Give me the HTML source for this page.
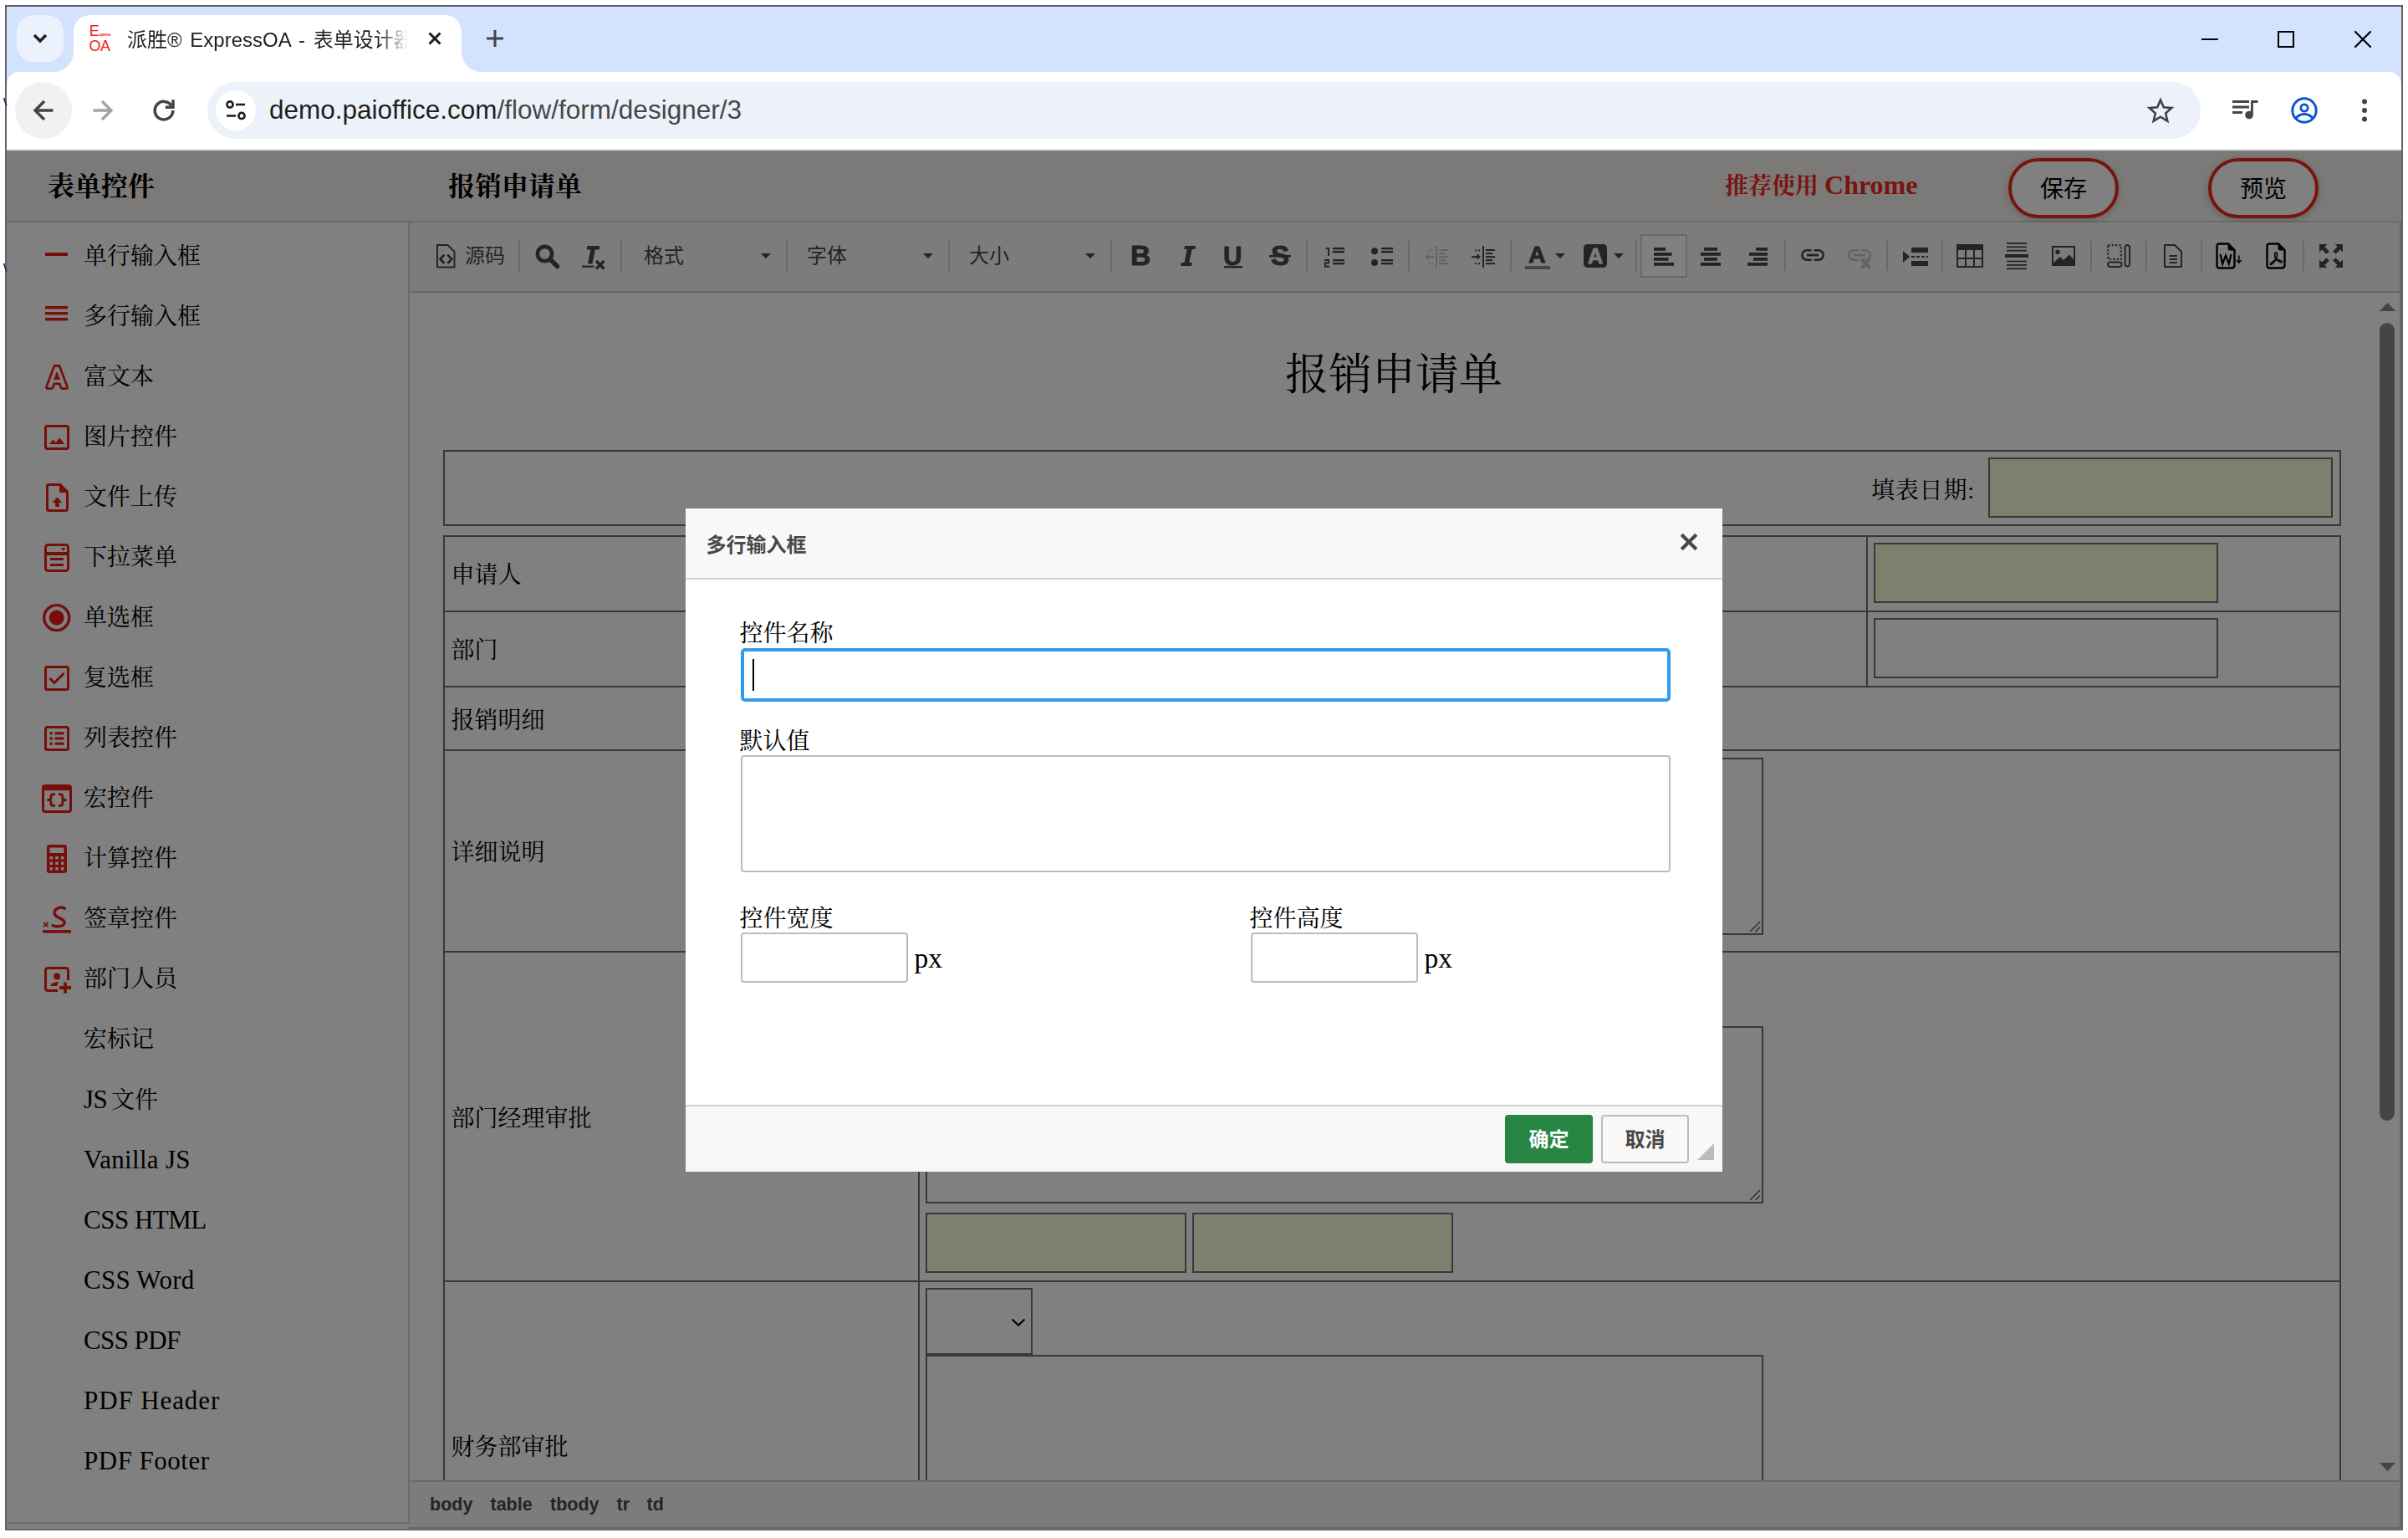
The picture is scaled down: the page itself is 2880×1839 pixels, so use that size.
<!DOCTYPE html>
<html lang="zh-CN">
<head>
<meta charset="utf-8">
<title>派胜® ExpressOA - 表单设计器</title>
<style>
*{box-sizing:border-box;margin:0;padding:0}
html,body{width:2880px;height:1839px;overflow:hidden;background:#fff}
body{position:relative;font-family:"Liberation Serif","Noto Serif CJK SC",serif;color:#000}
.abs{position:absolute}
.sans{font-family:"Liberation Sans","Noto Sans CJK SC",sans-serif}
.serif{font-family:"Liberation Serif","Noto Serif CJK SC",serif}
#win{position:absolute;left:6px;top:6px;width:2868px;height:1824px;background:#646464;border-top:2px solid #565b62;border-bottom:2px solid #6a6a6a;overflow:hidden}
#inner{position:absolute;left:2px;top:0;width:2864px;height:1820px;background:#fff;overflow:hidden}
/* coordinates inside #inner are offset by (8,8) from the screenshot */
#tabstrip{position:absolute;left:0;top:0;width:2864px;height:100px;background:#d3e3fd}
#navbar{position:absolute;left:0;top:78px;width:2864px;height:92px;background:#fff;border-radius:15px 15px 0 0}
#navline{position:absolute;left:0;top:170px;width:2864px;height:2px;background:#e4e4e4}
#page{position:absolute;left:0;top:172px;width:2864px;height:1648px;background:#fff;overflow:hidden}
#dim{position:absolute;left:0;top:172px;width:2864px;height:1648px;background:rgba(0,0,0,.498)}

/* ---- browser chrome ---- */
#tabdd{position:absolute;left:12px;top:10px;width:56px;height:56px;border-radius:20px;background:#ecf2fd}
#tab{position:absolute;left:80px;top:10px;width:464px;height:70px;background:#fff;border-radius:20px 20px 0 0}
#tab:before,#tab:after{content:"";position:absolute;bottom:2px;width:24px;height:24px;background:radial-gradient(circle at 0 0,rgba(255,255,255,0) 23.5px,#fff 24.5px)}
#tab:before{left:-24px}
#tab:after{right:-24px;transform:scaleX(-1)}
#fav{position:absolute;left:98px;top:19px;width:30px;height:36px;color:#ea1f1a;font-family:"Liberation Sans",sans-serif;line-height:1}
#ttl{word-spacing:3px;position:absolute;left:144px;top:22px;width:336px;height:36px;line-height:36px;font-size:24px;color:#1f1f1f;white-space:nowrap;overflow:hidden;font-family:"Liberation Sans","Noto Sans CJK SC",sans-serif;-webkit-mask-image:linear-gradient(90deg,#000 300px,transparent 336px);mask-image:linear-gradient(90deg,#000 300px,transparent 336px)}
#backbtn{position:absolute;left:10px;top:90px;width:68px;height:68px;border-radius:34px;background:#f1f1f1}
#omni{position:absolute;left:240px;top:90px;width:2384px;height:68px;border-radius:34px;background:#edf1fa}
#sinfo{position:absolute;left:250px;top:100px;width:48px;height:48px;border-radius:24px;background:#fff}
#url{position:absolute;left:314px;top:99px;height:48px;line-height:48px;font-size:31.5px;color:#1f1f1f;white-space:nowrap;font-family:"Liberation Sans",sans-serif}
#url span{color:#474747}
svg{position:absolute;overflow:visible}

/* ---- dialog (coords = screenshot - (8,8)) ---- */
#dlg{position:absolute;left:812px;top:600px;width:1240px;height:793px;background:#fff;overflow:hidden}
#dlg .tt{position:absolute;left:0;top:0;width:1240px;height:83px;background:#f8f8f8;border-bottom:2px solid #d1d1d1;box-sizing:content-box}
#dlg .ttx{position:absolute;left:24.5px;top:20px;height:48px;line-height:48px;font-size:24px;font-weight:bold;color:#484848;white-space:nowrap;font-family:"Liberation Sans","Noto Sans CJK SC",sans-serif}
#dlg .lb{position:absolute;height:48px;line-height:48px;font-size:28px;white-space:nowrap;color:#000}
#dlg .in{position:absolute;border:2px solid #bcbcbc;border-radius:4px;background:#fff}
#dlg .ft{position:absolute;left:0;top:713px;width:1240px;height:80px;background:#f8f8f8;border-top:2px solid #d1d1d1}
#dlg .bt{position:absolute;top:725px;width:105px;height:58px;border-radius:4px;font-size:24px;font-weight:bold;line-height:60px;text-align:center;font-family:"Liberation Sans","Noto Sans CJK SC",sans-serif}

/* ---- editor ---- */
#tb{position:absolute;left:482px;top:86px;width:2380px;height:82px;background:#f8f8f8;border-bottom:2px solid #d1d1d1;box-sizing:content-box}
#edr{position:absolute;left:2862px;top:86px;width:2px;height:1562px;background:#d1d1d1}
.sep{position:absolute;top:108px;width:2px;height:36px;background:#d1d1d1}
.tbt{position:absolute;top:102px;height:48px;line-height:48px;font-size:24px;color:#484848;white-space:nowrap;font-family:"Liberation Sans","Noto Sans CJK SC",sans-serif}
.tbl{-webkit-text-stroke:.9px #484848;position:absolute;font-family:"Liberation Sans",sans-serif;font-weight:bold;color:#484848;line-height:1;white-space:nowrap}
#content{position:absolute;left:482px;top:170px;width:2380px;height:1420px;background:#fff;overflow:hidden}
#path{position:absolute;left:482px;top:1590px;width:2380px;height:56px;background:#f8f8f8;border-top:2px solid #d1d1d1;font-family:"Liberation Sans",sans-serif;font-weight:bold;font-size:21.5px;color:#484848;line-height:54px;white-space:nowrap}
#path span{position:absolute;top:0}
#pbot{position:absolute;left:480px;top:1646px;width:2384px;height:2px;background:#d1d1d1}

/* ---- page (coords = screenshot - (8,180)) ---- */
#hdr{position:absolute;left:0;top:0;width:2864px;height:84px;background:#f6f4f1;border-bottom:2px solid #d6d6d6;box-sizing:content-box}
.h1{position:absolute;top:19px;height:48px;line-height:48px;font-size:32px;font-weight:bold;white-space:nowrap;font-family:"Liberation Serif","Noto Serif CJK SC",serif}
#rec{position:absolute;left:2055px;top:17px;height:48px;line-height:48px;font-size:28px;font-weight:bold;color:#f2281c;white-space:nowrap}
.pill{position:absolute;top:9px;width:132px;height:72px;border:4px solid #f0281c;border-radius:36px;background:#fff;box-shadow:0 2px 10px rgba(0,0,0,.22);font-family:"Liberation Sans","Noto Sans CJK SC",sans-serif;font-size:28px;line-height:67px;text-align:center;color:#000}
#side{position:absolute;left:0;top:86px;width:482px;height:1556px;background:#fff;border-right:2px solid #d6d6d6;border-bottom:2px solid #d6d6d6}
.it{position:absolute;left:92px;height:72px;line-height:72px;font-size:28px;white-space:nowrap;color:#000}
.ic{position:absolute}
.ic *{vector-effect:none}
.it b{font-weight:normal;font-size:31px}
#rec b{font-size:32px}

</style>
</head>
<body>
<div id="win"><div id="inner">
<div id="tabstrip"></div>
<div id="navbar"></div>
<div id="navline"></div>
<div id="tabdd"></div>
<svg style="left:30px;top:31px" width="20" height="14" viewBox="0 0 20 14"><path d="M3 3 L10 10 L17 3" fill="none" stroke="#1f1f1f" stroke-width="3.4"/></svg>
<div id="tab"></div>
<div id="fav"><span class="abs" style="left:.7px;top:.8px;font-size:18.2px">E</span><span class="abs" style="left:12px;top:13px;font-size:4.7px;font-weight:bold;letter-spacing:-.3px">.xpress</span><span class="abs" style="left:.5px;top:19px;font-size:18px;letter-spacing:-.5px">OA</span></div>
<div id="ttl">派胜® ExpressOA - 表单设计器</div>
<svg style="left:504px;top:30px" width="16" height="16" viewBox="0 0 16 16"><path d="M1.5 1.5 L14.5 14.5 M14.5 1.5 L1.5 14.5" fill="none" stroke="#1f1f1f" stroke-width="3"/></svg>
<svg style="left:574px;top:28px" width="20" height="20" viewBox="0 0 20 20"><path d="M10 0 V20 M0 10 H20" fill="none" stroke="#444" stroke-width="3"/></svg>
<!-- window controls -->
<svg style="left:2625px;top:38px" width="20" height="2" viewBox="0 0 20 2"><rect width="20" height="2" fill="#000"/></svg>
<svg style="left:2716px;top:29px" width="20" height="20" viewBox="0 0 20 20"><rect x="1" y="1" width="18" height="18" fill="none" stroke="#000" stroke-width="2"/></svg>
<svg style="left:2808px;top:29px" width="20" height="20" viewBox="0 0 20 20"><path d="M1 1 L19 19 M19 1 L1 19" fill="none" stroke="#000" stroke-width="2.2" stroke-linecap="round"/></svg>

<div id="backbtn"></div>
<svg style="left:32px;top:112px" width="24" height="24" viewBox="0 0 24 24"><path d="M23.5 12 H3 M13 1 L2 12 L13 23" fill="none" stroke="#444" stroke-width="3.4"/></svg>
<svg style="left:103px;top:112px" width="24" height="24" viewBox="0 0 24 24"><path d="M0.5 12 H21 M11 1 L22 12 L11 23" fill="none" stroke="#a4a4a4" stroke-width="3.4"/></svg>
<svg style="left:174px;top:109px" width="28" height="28" viewBox="0 0 28 28"><path d="M23.2 9.5 A10.8 10.8 0 1 0 24.8 15" fill="none" stroke="#444" stroke-width="3.5"/><path d="M25 2.2 V11.2 H15.8" fill="none" stroke="#444" stroke-width="3.5"/></svg>
<div id="omni"></div>
<div id="sinfo"></div>
<svg style="left:262px;top:112px" width="24" height="24" viewBox="0 0 24 24"><circle cx="5" cy="5" r="3.6" fill="none" stroke="#1f1f1f" stroke-width="2.6"/><path d="M12 5 H23" stroke="#1f1f1f" stroke-width="2.6"/><circle cx="19" cy="18.5" r="3.6" fill="none" stroke="#1f1f1f" stroke-width="2.6"/><path d="M1 18.5 H12" stroke="#1f1f1f" stroke-width="2.6"/></svg>
<div id="url">demo.paioffice.com<span>/flow/form/designer/3</span></div>
<svg style="left:2560px;top:108px" width="32" height="32" viewBox="0 0 32 32"><path d="M16 3.5 L19.8 12.3 L29.3 13.1 L22.1 19.4 L24.3 28.7 L16 23.7 L7.7 28.7 L9.9 19.4 L2.7 13.1 L12.2 12.3 Z" fill="none" stroke="#444" stroke-width="2.6" stroke-linejoin="miter"/></svg>
<svg style="left:2662px;top:111px" width="32" height="24" viewBox="0 0 32 24"><path d="M0 2.5 H20 M0 9 H20 M0 15.5 H12" stroke="#444" stroke-width="2.8" fill="none"/><circle cx="20" cy="18.5" r="4.8" fill="#444"/><path d="M23.4 18.5 V2.5 H30.5" stroke="#444" stroke-width="2.8" fill="none"/></svg>
<svg style="left:2732px;top:108px" width="32" height="32" viewBox="0 0 32 32"><defs><clipPath id="pc"><circle cx="16" cy="16" r="14"/></clipPath></defs><circle cx="16" cy="16" r="14.2" fill="none" stroke="#0b57d0" stroke-width="3"/><circle cx="16" cy="13" r="4.2" fill="none" stroke="#0b57d0" stroke-width="2.8"/><path d="M5 27 C8 21.5 12 20.5 16 20.5 C20 20.5 24 21.5 27 27" fill="none" stroke="#0b57d0" stroke-width="2.8" clip-path="url(#pc)"/></svg>
<svg style="left:2816px;top:110px" width="8" height="28" viewBox="0 0 8 28"><circle cx="4" cy="3.5" r="3" fill="#444"/><circle cx="4" cy="14" r="3" fill="#444"/><circle cx="4" cy="24.5" r="3" fill="#444"/></svg>

<div id="page">
<div id="hdr"></div>
<div class="h1" style="left:49px">表单控件</div>
<div class="h1" style="left:528px">报销申请单</div>
<div id="rec">推荐使用 <b>Chrome</b></div>
<div class="pill" style="left:2394px">保存</div>
<div class="pill" style="left:2633px">预览</div>
<div id="side">
<div class="it" style="top:5px">单行输入框</div>
<div class="it" style="top:77px">多行输入框</div>
<div class="it" style="top:149px">富文本</div>
<div class="it" style="top:221px">图片控件</div>
<div class="it" style="top:293px">文件上传</div>
<div class="it" style="top:365px">下拉菜单</div>
<div class="it" style="top:437px">单选框</div>
<div class="it" style="top:509px">复选框</div>
<div class="it" style="top:581px">列表控件</div>
<div class="it" style="top:653px">宏控件</div>
<div class="it" style="top:725px">计算控件</div>
<div class="it" style="top:797px">签章控件</div>
<div class="it" style="top:869px">部门人员</div>
<div class="it" style="top:941px">宏标记</div>
<div class="it" style="top:1013px"><b style="letter-spacing:-.6px">JS</b><span style="margin-left:-2px"> 文件</span></div>
<div class="it" style="top:1085px"><b style="letter-spacing:.3px">Vanilla JS</b></div>
<div class="it" style="top:1157px"><b style="letter-spacing:-.5px">CSS HTML</b></div>
<div class="it" style="top:1229px"><b style="letter-spacing:.25px">CSS Word</b></div>
<div class="it" style="top:1301px"><b style="letter-spacing:-.6px">CSS PDF</b></div>
<div class="it" style="top:1373px"><b style="letter-spacing:.9px">PDF Header</b></div>
<div class="it" style="top:1445px"><b style="letter-spacing:.5px">PDF Footer</b></div>
<svg class="ic" style="left:46px;top:36px" width="28" height="4" viewBox="0 0 28 4"><rect width="27" height="4" fill="#ee1c12"/></svg>
<svg class="ic" style="left:46px;top:100px" width="28" height="18" viewBox="0 0 28 18"><rect y="0" width="27" height="3.4" fill="#ee1c12"/><rect y="7" width="27" height="3.4" fill="#ee1c12"/><rect y="14" width="27" height="3.4" fill="#ee1c12"/></svg>
<svg class="ic" style="left:46px;top:170px" width="28" height="30" viewBox="0 0 28 30"><path d="M11 1.3 H17 L26.4 26.3 Q27.2 28.7 24.8 28.7 H20.8 Q19.3 28.7 18.7 27.2 L17.3 22.8 H10.7 L9.3 27.2 Q8.7 28.7 7.2 28.7 H3.2 Q0.8 28.7 1.6 26.3 Z" fill="none" stroke="#ee1c12" stroke-width="2.7" stroke-linejoin="round"/><path d="M14 8 L18 18 H10 Z" fill="#ee1c12"/></svg>
<svg class="ic" style="left:45px;top:242px" width="30" height="30" viewBox="0 0 30 30"><rect x="1.5" y="1.5" width="27" height="27" rx="2" fill="none" stroke="#ee1c12" stroke-width="3"/><path d="M6 23 L10.5 17.5 L13.6 21 L18.5 15.4 L24 23 Z" fill="#ee1c12"/></svg>
<svg class="ic" style="left:46.8px;top:312px" width="28" height="34" viewBox="0 0 28 34"><path d="M3 1.5 H17 L25.5 10 V30.5 Q25.5 32.5 23.5 32.5 H3.5 Q1.5 32.5 1.5 30.5 V3 Q1.5 1.5 3 1.5 Z" fill="none" stroke="#ee1c12" stroke-width="3" stroke-linejoin="round"/><path d="M16 1.5 V11 H25.5 Z" fill="#ee1c12"/><path d="M13.5 16.5 L19.5 23 H15.8 V28 H11.2 V23 H7.5 Z" fill="#ee1c12"/></svg>
<svg class="ic" style="left:45px;top:384px" width="30" height="34" viewBox="0 0 30 34"><rect x="1.5" y="1.5" width="27" height="31" rx="3" fill="none" stroke="#ee1c12" stroke-width="3"/><rect x="1.5" y="10" width="27" height="4" fill="#ee1c12"/><path d="M20 5 H25.5 L22.75 9 Z" fill="#ee1c12"/><rect x="7" y="17" width="16" height="3" fill="#ee1c12"/><rect x="7" y="24" width="16" height="3" fill="#ee1c12"/></svg>
<svg class="ic" style="left:42px;top:455px" width="36" height="36" viewBox="0 0 36 36"><circle cx="17.7" cy="17.6" r="15" fill="none" stroke="#ee1c12" stroke-width="3.4"/><circle cx="17.7" cy="17.6" r="9" fill="#ee1c12"/></svg>
<svg class="ic" style="left:45px;top:530px" width="30" height="30" viewBox="0 0 30 30"><rect x="1.5" y="1.5" width="27" height="27" rx="2" fill="none" stroke="#ee1c12" stroke-width="3"/><path d="M6.5 15 L12 20.5 L23.5 9" fill="none" stroke="#ee1c12" stroke-width="3"/></svg>
<svg class="ic" style="left:45px;top:602px" width="30" height="30" viewBox="0 0 30 30"><rect x="1.5" y="1.5" width="27" height="27" rx="2" fill="none" stroke="#ee1c12" stroke-width="3"/><rect x="6.5" y="7.2" width="3.4" height="3.2" fill="#ee1c12"/><rect x="12.5" y="7.2" width="11" height="3.2" fill="#ee1c12"/><rect x="6.5" y="13.4" width="3.4" height="3.2" fill="#ee1c12"/><rect x="12.5" y="13.4" width="11" height="3.2" fill="#ee1c12"/><rect x="6.5" y="19.6" width="3.4" height="3.2" fill="#ee1c12"/><rect x="12.5" y="19.6" width="11" height="3.2" fill="#ee1c12"/></svg>
<svg class="ic" style="left:42px;top:672px" width="36" height="34" viewBox="0 0 36 34"><rect x="1.5" y="1.5" width="33" height="31" rx="2.5" fill="none" stroke="#ee1c12" stroke-width="3"/><rect x="1.5" y="1.5" width="33" height="5.6" fill="#ee1c12"/><path d="M16 11.7 H13.5 Q11 11.7 11 14.2 V16 Q11 18.5 7.4 18.5 Q11 18.5 11 21 V22.8 Q11 25.3 13.5 25.3 H16 M19.8 11.7 H22.3 Q24.8 11.7 24.8 14.2 V16 Q24.8 18.5 28.4 18.5 Q24.8 18.5 24.8 21 V22.8 Q24.8 25.3 22.3 25.3 H19.8" fill="none" stroke="#ee1c12" stroke-width="3" stroke-linejoin="round"/></svg>
<svg class="ic" style="left:48px;top:744px" width="24" height="34" viewBox="0 0 24 34"><path fill-rule="evenodd" fill="#ee1c12" d="M3 0 H21 Q24 0 24 3 V31 Q24 34 21 34 H3 Q0 34 0 31 V3 Q0 0 3 0 Z M3.5 3.5 V10 H20.5 V3.5 Z M3.5 14 h3.6 v3.6 h-3.6 Z M10.2 14 h3.6 v3.6 h-3.6 Z M16.9 14 h3.6 v3.6 h-3.6 Z M3.5 20.5 h3.6 v3.6 h-3.6 Z M10.2 20.5 h3.6 v3.6 h-3.6 Z M16.9 20.5 h3.6 v3.6 h-3.6 Z M3.5 27 h3.6 v3.6 h-3.6 Z M10.2 27 h3.6 v3.6 h-3.6 Z M16.9 27 h3.6 v3.6 h-3.6 Z"/></svg>
<svg class="ic" style="left:43px;top:817px" width="34" height="34" viewBox="0 0 34 34"><path d="M26.4 3.2 Q24.4 1.3 20 2.4 Q13.6 4.2 14.1 9 Q14.4 12 20 14.6 Q26.8 17.6 26.2 20.6 Q25.4 24.4 18 24.7 Q14 24.9 12 23.6" fill="none" stroke="#ee1c12" stroke-width="3.4" stroke-linecap="round"/><path d="M1 19.8 L6.6 25.4 M6.6 19.8 L1 25.4" stroke="#ee1c12" stroke-width="1.8" fill="none"/><rect x="0" y="29.1" width="34" height="3.5" fill="#ee1c12"/></svg>
<svg class="ic" style="left:45px;top:890px" width="34" height="34" viewBox="0 0 34 34"><path d="M28.5 16 V4.5 Q28.5 1.5 25.5 1.5 H4.5 Q1.5 1.5 1.5 4.5 V25.5 Q1.5 28.5 4.5 28.5 H16" fill="none" stroke="#ee1c12" stroke-width="3"/><circle cx="15.1" cy="11.6" r="4" fill="#ee1c12"/><path d="M7.3 22.9 Q7.6 18.4 17.2 17.9 L15 22.9 Z" fill="#ee1c12"/><path d="M25 18.4 V31.8 M18 25 H32.1" stroke="#ee1c12" stroke-width="3.8" fill="none"/></svg>
</div>

<div id="tb"></div>
<div id="edr"></div>
<div class="sep" style="left:612px"></div>
<div class="sep" style="left:734px"></div>
<div class="sep" style="left:932px"></div>
<div class="sep" style="left:1126px"></div>
<div class="sep" style="left:1320px"></div>
<div class="sep" style="left:1554px"></div>
<div class="sep" style="left:1676px"></div>
<div class="sep" style="left:1798px"></div>
<div class="sep" style="left:1948px"></div>
<div class="sep" style="left:2126px"></div>
<div class="sep" style="left:2248px"></div>
<div class="sep" style="left:2314px"></div>
<div class="sep" style="left:2492px"></div>
<div class="sep" style="left:2558px"></div>
<div class="sep" style="left:2624px"></div>
<div class="sep" style="left:2746px"></div>
<svg style="left:514px;top:112px" width="23" height="29" viewBox="0 0 23 29"><path d="M1 1 H13.5 L21.5 9 V27.5 H1 Z" fill="none" stroke="#484848" stroke-width="2"/><path d="M9.4 12.6 L4.6 17.8 L9.4 23 M13.4 12.6 L18.2 17.8 L13.4 23" fill="none" stroke="#484848" stroke-width="2.8"/></svg>
<div class="tbt" style="left:548px">源码</div>
<svg style="left:632px;top:112px" width="30" height="30" viewBox="0 0 30 30"><circle cx="11.5" cy="11.5" r="8.6" fill="none" stroke="#484848" stroke-width="4.6"/><path d="M18.5 18.5 L26.5 26.5" stroke="#484848" stroke-width="5.6" stroke-linecap="round"/></svg>
<svg style="left:688px;top:114px" width="28" height="29" viewBox="0 0 28 29"><path d="M6.5 0 H21.5 L20.6 4.6 H15.8 L12.4 21.5 H7 L10.4 4.6 H5.6 Z" fill="#484848"/><rect x="0" y="23.6" width="14.5" height="2.2" fill="#484848"/><path d="M17 18 L26.5 27.5 M26.5 18 L17 27.5" stroke="#484848" stroke-width="3.2" fill="none"/></svg>
<div class="tbt" style="left:762px">格式</div>
<svg style="left:902px;top:123px" width="12" height="6" viewBox="0 0 12 6"><path d="M0 0 H12 L6 6 Z" fill="#484848"/></svg>
<div class="tbt" style="left:957px">字体</div>
<svg style="left:1096px;top:123px" width="12" height="6" viewBox="0 0 12 6"><path d="M0 0 H12 L6 6 Z" fill="#484848"/></svg>
<div class="tbt" style="left:1151px">大小</div>
<svg style="left:1290px;top:123px" width="12" height="6" viewBox="0 0 12 6"><path d="M0 0 H12 L6 6 Z" fill="#484848"/></svg>
<div class="tbl" style="left:1344px;top:109px;font-size:33.5px">B</div>
<svg style="left:1401px;top:114px" width="22" height="25" viewBox="0 0 22 25"><path d="M8 0 H21 L20.2 4 H16.6 L13.3 20 H16.9 L16.1 24 H3.1 L3.9 20 H7.5 L10.8 4 H7.2 Z" fill="#484848"/></svg>
<div class="tbl" style="left:1455px;top:111px;font-size:31px">U</div>
<svg style="left:1456px;top:138px" width="22" height="2.4" viewBox="0 0 22 2.4"><rect width="22" height="2.4" fill="#484848"/></svg>
<div class="tbl" style="left:1512px;top:109px;font-size:33px">S</div>
<svg style="left:1510px;top:125px" width="26" height="2.6" viewBox="0 0 26 2.6"><rect width="26" height="2.6" fill="#484848"/></svg>
<svg style="left:1576px;top:116px" width="25" height="24" viewBox="0 0 25 24"><rect x="10" y="0" width="14" height="2.4" fill="#484848"/><rect x="10" y="3.9" width="14" height="2.4" fill="#484848"/><rect x="10" y="14" width="14" height="2.4" fill="#484848"/><rect x="10" y="17.9" width="14" height="2.4" fill="#484848"/><path d="M1.8 1 H5 V10" fill="none" stroke="#484848" stroke-width="2"/><path d="M0 15 H5 V18.6 H1 V22.8 H6" fill="none" stroke="#484848" stroke-width="2"/></svg>
<svg style="left:1632px;top:116px" width="26" height="24" viewBox="0 0 26 24"><circle cx="4" cy="4.2" r="4" fill="#484848"/><circle cx="4" cy="18.1" r="4" fill="#484848"/><rect x="12" y="0" width="14" height="2.4" fill="#484848"/><rect x="12" y="3.9" width="14" height="2.4" fill="#484848"/><rect x="12" y="14" width="14" height="2.4" fill="#484848"/><rect x="12" y="17.9" width="14" height="2.4" fill="#484848"/></svg>
<svg style="left:1696px;top:114px" width="28" height="26" viewBox="0 0 28 26"><rect x="13" y="0" width="2" height="26" fill="#c6c6c6"/><rect x="17" y="4" width="11" height="2.1" fill="#c6c6c6"/><rect x="17" y="8.03" width="8" height="2.1" fill="#c6c6c6"/><rect x="17" y="12.06" width="11" height="2.1" fill="#c6c6c6"/><rect x="17" y="16.09" width="8" height="2.1" fill="#c6c6c6"/><rect x="17" y="20.12" width="11" height="2.1" fill="#c6c6c6"/><rect x="4" y="4.4" width="2" height="2" fill="#c6c6c6"/><rect x="4" y="20.2" width="2" height="2" fill="#c6c6c6"/><rect x="8" y="4.4" width="2" height="2" fill="#c6c6c6"/><rect x="8" y="20.2" width="2" height="2" fill="#c6c6c6"/><path d="M11 13.1 H3" stroke="#c6c6c6" stroke-width="2" fill="none"/><path d="M0 13.1 L4.5 9.3 V16.9 Z" fill="#c6c6c6"/></svg>
<svg style="left:1752px;top:114px" width="28" height="26" viewBox="0 0 28 26"><rect x="13" y="0" width="2" height="26" fill="#484848"/><rect x="17" y="4" width="11" height="2.1" fill="#484848"/><rect x="17" y="8.03" width="8" height="2.1" fill="#484848"/><rect x="17" y="12.06" width="11" height="2.1" fill="#484848"/><rect x="17" y="16.09" width="8" height="2.1" fill="#484848"/><rect x="17" y="20.12" width="11" height="2.1" fill="#484848"/><rect x="4" y="4.4" width="2" height="2" fill="#484848"/><rect x="4" y="20.2" width="2" height="2" fill="#484848"/><rect x="8" y="4.4" width="2" height="2" fill="#484848"/><rect x="8" y="20.2" width="2" height="2" fill="#484848"/><path d="M0 13.1 H8" stroke="#484848" stroke-width="2" fill="none"/><path d="M11 13.1 L6.5 9.3 V16.9 Z" fill="#484848"/></svg>
<div class="tbl" style="left:1820px;top:110px;font-size:28.5px">A</div>
<svg style="left:1816px;top:138px" width="30" height="4" viewBox="0 0 30 4"><rect width="30" height="4" fill="#8c8c8c"/></svg>
<svg style="left:1852px;top:123px" width="12" height="6" viewBox="0 0 12 6"><path d="M0 0 H12 L6 6 Z" fill="#484848"/></svg>
<svg style="left:1886px;top:112px" width="28" height="28" viewBox="0 0 28 28"><rect width="28" height="28" rx="4.5" fill="#484848"/></svg>
<div class="tbl" style="left:1891px;top:114px;font-size:25px;color:#f8f8f8;-webkit-text-stroke:.9px #f8f8f8">A</div>
<svg style="left:1922px;top:123px" width="12" height="6" viewBox="0 0 12 6"><path d="M0 0 H12 L6 6 Z" fill="#484848"/></svg>
<div class="abs" style="left:1954px;top:100px;width:56px;height:52px;border:2px solid #d1d1d1;background:#fff"></div>
<svg style="left:1970px;top:116px" width="24" height="22" viewBox="0 0 24 22"><rect x="0" y="0" width="14" height="3.8" fill="#484848"/><rect x="0" y="6" width="21.5" height="3.8" fill="#484848"/><rect x="0" y="12" width="17.5" height="3.8" fill="#484848"/><rect x="0" y="18" width="24" height="3.8" fill="#484848"/></svg>
<svg style="left:2026px;top:116px" width="24" height="22" viewBox="0 0 24 22"><rect x="4" y="0" width="16" height="3.8" fill="#484848"/><rect x="0" y="6" width="24" height="3.8" fill="#484848"/><rect x="4" y="12" width="16" height="3.8" fill="#484848"/><rect x="0" y="18" width="24" height="3.8" fill="#484848"/></svg>
<svg style="left:2082px;top:116px" width="24" height="22" viewBox="0 0 24 22"><rect x="10" y="0" width="14" height="3.8" fill="#484848"/><rect x="2" y="6" width="22" height="3.8" fill="#484848"/><rect x="7" y="12" width="17" height="3.8" fill="#484848"/><rect x="0" y="18" width="24" height="3.8" fill="#484848"/></svg>
<svg style="left:2146px;top:118px" width="28" height="14" viewBox="0 0 28 14"><path d="M12.6 1.3 H7 A5.7 5.7 0 0 0 7 12.7 H12.6 M15.4 1.3 H21 A5.7 5.7 0 0 1 21 12.7 H15.4" fill="none" stroke="#484848" stroke-width="2.6"/><rect x="7" y="5.6" width="14" height="2.8" fill="#484848"/></svg>
<svg style="left:2202px;top:118px" width="28" height="14" viewBox="0 0 28 14"><path d="M12.6 1.3 H7 A5.7 5.7 0 0 0 7 12.7 H12.6 M15.4 1.3 H21 A5.7 5.7 0 0 1 21 12.7 H15.4" fill="none" stroke="#c6c6c6" stroke-width="2.6"/><rect x="7" y="5.6" width="14" height="2.8" fill="#c6c6c6"/></svg>
<svg style="left:2217px;top:129px" width="13" height="13" viewBox="0 0 13 13"><path d="M1.5 1.5 L11.5 11.5 M11.5 1.5 L1.5 11.5" stroke="#c6c6c6" stroke-width="3.2" fill="none"/></svg>
<svg style="left:2268px;top:116px" width="30" height="22" viewBox="0 0 30 22"><rect x="10" y="0" width="20" height="6" fill="#484848"/><rect x="10" y="16" width="20" height="6" fill="#484848"/><path d="M10 11 H30" stroke="#484848" stroke-width="2" stroke-dasharray="4 2" fill="none"/><path d="M0 4 L8 11 L0 18 Z" fill="#484848"/></svg>
<svg style="left:2332px;top:112px" width="32" height="28" viewBox="0 0 32 28"><rect x="0" y="0" width="32" height="7" fill="#484848"/><rect x="1" y="1" width="30" height="26" fill="none" stroke="#484848" stroke-width="2"/><path d="M11 6 V27 M21 6 V27 M1 17 H31" stroke="#484848" stroke-width="2" fill="none"/></svg>
<svg style="left:2390px;top:110px" width="28" height="32" viewBox="0 0 28 32"><rect x="2" y="0" width="24" height="1.8" fill="#484848"/><rect x="2" y="4.4" width="24" height="1.8" fill="#484848"/><rect x="2" y="8.8" width="24" height="1.8" fill="#484848"/><rect x="2" y="21.6" width="24" height="1.8" fill="#484848"/><rect x="2" y="26" width="24" height="1.8" fill="#484848"/><rect x="2" y="30.4" width="24" height="1.8" fill="#484848"/><rect x="0" y="14" width="28" height="4" fill="#484848"/></svg>
<svg style="left:2446px;top:114px" width="28" height="24" viewBox="0 0 28 24"><rect x="1" y="1" width="26" height="22" fill="none" stroke="#484848" stroke-width="2"/><circle cx="7" cy="7.2" r="2.8" fill="#484848"/><path d="M2 22 V20 L9.5 13 L14 17 L21 10.5 L26 16 V22 Z" fill="#484848"/></svg>
<svg style="left:2512px;top:112px" width="28" height="28" viewBox="0 0 28 28"><rect x="1.2" y="1.2" width="15.6" height="16.6" fill="none" stroke="#484848" stroke-width="2.2" stroke-dasharray="2.2 2.2"/><rect x="21.6" y="1" width="5.4" height="25.5" rx="2.7" fill="none" stroke="#484848" stroke-width="2"/><rect x="1" y="21.6" width="16.5" height="5.4" rx="2.7" fill="none" stroke="#484848" stroke-width="2"/></svg>
<svg style="left:2580px;top:112px" width="22" height="28" viewBox="0 0 22 28"><path d="M1 1 H13 L21 9 V27 H1 Z" fill="none" stroke="#484848" stroke-width="2"/><path d="M6.5 14 H16 M6.5 18 H16 M6.5 22 H16" stroke="#484848" stroke-width="1.8" fill="none"/></svg>
<svg style="left:2642px;top:110px" width="32" height="32" viewBox="0 0 32 32"><path d="M4.5 1.5 H15 L22.5 9 V27 Q22.5 30.5 19 30.5 H4.5 Q1.5 30.5 1.5 27.5 V4.5 Q1.5 1.5 4.5 1.5 Z" fill="none" stroke="#000" stroke-width="2.4"/><path d="M14.5 1.5 V7 Q14.5 9.5 17 9.5 H22.5 Z" fill="#000"/><path d="M5.5 14 L8.2 25.5 L12 15.5 L15.8 25.5 L18.5 14" fill="none" stroke="#000" stroke-width="2.2" stroke-linejoin="miter"/><path d="M27.8 15.5 V24 M24.8 21 L27.8 24 L30.8 21" fill="none" stroke="#000" stroke-width="1.6"/></svg>
<svg style="left:2702px;top:110px" width="24" height="32" viewBox="0 0 24 32"><path d="M4.5 1.5 H15 L22.5 9 V27 Q22.5 30.5 19 30.5 H4.5 Q1.5 30.5 1.5 27.5 V4.5 Q1.5 1.5 4.5 1.5 Z" fill="none" stroke="#000" stroke-width="2.4"/><path d="M14.5 1.5 V7 Q14.5 9.5 17 9.5 H22.5 Z" fill="#000"/><path d="M12 20.3 C9.8 16 10.5 11.9 12 11.9 C13.5 11.9 14.2 16 12 20.3 C9.5 24 6.4 27.3 5.4 26.4 C4.5 25.5 8 22.3 12 20.3 C15.5 20.5 19.8 22 19.4 23.3 C19 24.6 15 23 12 20.3 Z" fill="none" stroke="#000" stroke-width="1.5" stroke-linejoin="round"/></svg>
<svg style="left:2766px;top:112px" width="28" height="28" viewBox="0 0 28 28"><g transform="translate(14 14) scale(1 1)"><path d="M-14 -14 H-4.5 L-7.6 -10.9 L-2.2 -5.5 L-5.5 -2.2 L-10.9 -7.6 L-14 -4.5 Z" fill="#484848"/></g><g transform="translate(14 14) scale(-1 1)"><path d="M-14 -14 H-4.5 L-7.6 -10.9 L-2.2 -5.5 L-5.5 -2.2 L-10.9 -7.6 L-14 -4.5 Z" fill="#484848"/></g><g transform="translate(14 14) scale(1 -1)"><path d="M-14 -14 H-4.5 L-7.6 -10.9 L-2.2 -5.5 L-5.5 -2.2 L-10.9 -7.6 L-14 -4.5 Z" fill="#484848"/></g><g transform="translate(14 14) scale(-1 -1)"><path d="M-14 -14 H-4.5 L-7.6 -10.9 L-2.2 -5.5 L-5.5 -2.2 L-10.9 -7.6 L-14 -4.5 Z" fill="#484848"/></g></svg>

<div id="content">
<div class="abs" style="left:3px;top:59px;width:2348px;height:80px;line-height:80px;text-align:center;font-size:52px;white-space:nowrap">报销申请单</div>
<div class="abs" style="left:40px;top:188px;width:2270px;height:90.5px;border:2px solid #707070;background:transparent;"></div>
<div class="abs" style="left:1748px;top:212.5px;height:48px;line-height:48px;font-size:28px;white-space:nowrap;letter-spacing:.8px">填表日期:</div>
<div class="abs" style="left:1888px;top:197px;width:412px;height:72px;border:2px solid #707070;background:#fcfdd8;"></div>
<div class="abs" style="left:40px;top:289.5px;width:2270px;height:1290.5px;border:2px solid #707070;background:transparent;"></div>
<div class="abs" style="left:40px;top:379.5px;width:2270px;height:2px;background:#707070"></div>
<div class="abs" style="left:40px;top:469.5px;width:2270px;height:2px;background:#707070"></div>
<div class="abs" style="left:40px;top:546px;width:2270px;height:2px;background:#707070"></div>
<div class="abs" style="left:40px;top:787px;width:2270px;height:2px;background:#707070"></div>
<div class="abs" style="left:40px;top:1180.5px;width:2270px;height:2px;background:#707070"></div>
<div class="abs" style="left:607.5px;top:289.5px;width:2px;height:180.5px;background:#707070"></div>
<div class="abs" style="left:607.5px;top:546px;width:2px;height:1034px;background:#707070"></div>
<div class="abs" style="left:1741.5px;top:289.5px;width:2px;height:180.5px;background:#707070"></div>
<div class="abs" style="left:49.5px;top:314px;height:48px;line-height:48px;font-size:28px;white-space:nowrap">申请人</div>
<div class="abs" style="left:49.5px;top:404px;height:48px;line-height:48px;font-size:28px;white-space:nowrap">部门</div>
<div class="abs" style="left:49.5px;top:488px;height:48px;line-height:48px;font-size:28px;white-space:nowrap">报销明细</div>
<div class="abs" style="left:49.5px;top:646px;height:48px;line-height:48px;font-size:28px;white-space:nowrap">详细说明</div>
<div class="abs" style="left:49.5px;top:964px;height:48px;line-height:48px;font-size:28px;white-space:nowrap">部门经理审批</div>
<div class="abs" style="left:49.5px;top:1356.5px;height:48px;line-height:48px;font-size:28px;white-space:nowrap">财务部审批</div>
<div class="abs" style="left:1751px;top:299px;width:412px;height:72px;border:2px solid #707070;background:#fcfdd8;"></div>
<div class="abs" style="left:1751px;top:389px;width:412px;height:72px;border:2px solid #707070;background:#fff;"></div>
<div class="abs" style="left:617px;top:299px;width:412px;height:72px;border:2px solid #707070;background:#fcfdd8;"></div>
<div class="abs" style="left:617px;top:389px;width:412px;height:72px;border:2px solid #707070;background:#fff;"></div>
<div class="abs" style="left:617px;top:556px;width:1002px;height:212px;border:2px solid #707070;background:#fff"><svg style="right:1px;bottom:1px" width="14" height="14" viewBox="0 0 14 14"><path d="M13 1 L1 13 M13 7.5 L7.5 13" stroke="#6a6a6a" stroke-width="1.6" fill="none"/></svg></div>
<div class="abs" style="left:617px;top:877px;width:1002px;height:211.5px;border:2px solid #707070;background:#fff"><svg style="right:1px;bottom:1px" width="14" height="14" viewBox="0 0 14 14"><path d="M13 1 L1 13 M13 7.5 L7.5 13" stroke="#6a6a6a" stroke-width="1.6" fill="none"/></svg></div>
<div class="abs" style="left:617px;top:1100px;width:312px;height:72px;border:2px solid #707070;background:#fcfdd8;"></div>
<div class="abs" style="left:936px;top:1100px;width:312px;height:72px;border:2px solid #707070;background:#fcfdd8;"></div>
<div class="abs" style="left:617px;top:1190px;width:128px;height:80px;border:2px solid #707070;background:#fff;"></div>
<svg style="left:719px;top:1226px" width="18" height="10" viewBox="0 0 18 10"><path d="M1.5 1.5 L9 8.5 L16.5 1.5" fill="none" stroke="#000" stroke-width="2.2"/></svg>
<div class="abs" style="left:617px;top:1269.5px;width:1002px;height:280.5px;border:2px solid #707070;background:#fff"><svg style="right:1px;bottom:1px" width="14" height="14" viewBox="0 0 14 14"><path d="M13 1 L1 13 M13 7.5 L7.5 13" stroke="#6a6a6a" stroke-width="1.6" fill="none"/></svg></div>
<div class="abs" style="left:2348px;top:0;width:32px;height:1420px;background:#fff"></div>
<svg style="left:2355.5px;top:11.5px" width="19" height="10" viewBox="0 0 19 10"><path d="M0 10 H19 L9.5 0 Z" fill="#8a8a8a"/></svg>
<svg style="left:2355.5px;top:1398.5px" width="19" height="10" viewBox="0 0 19 10"><path d="M0 0 H19 L9.5 10 Z" fill="#8a8a8a"/></svg>
<div class="abs" style="left:2356px;top:36px;width:18px;height:953.5px;border-radius:9px;background:#898989"></div>
</div>
<div id="path"><span style="left:24px">body</span><span style="left:96.5px">table</span><span style="left:168px">tbody</span><span style="left:247.5px">tr</span><span style="left:283.5px">td</span></div>
<div id="pbot"></div>

</div>
<div id="dim"></div>
<div id="dlg">
<div class="tt"></div>
<div class="ttx">多行输入框</div>
<svg style="left:1190px;top:30px" width="20" height="20" viewBox="0 0 20 20"><path d="M1.2 1.2 L18.8 18.8 M18.8 1.2 L1.2 18.8" stroke="#484848" stroke-width="4.2" fill="none"/></svg>
<div class="lb" style="left:64.5px;top:126px">控件名称</div>
<div class="in" style="left:66px;top:167px;width:1112px;height:64px;border:4px solid #2f9bee;border-radius:5px"></div>
<div class="abs" style="left:80px;top:180px;width:2px;height:38px;background:#000"></div>
<div class="lb" style="left:64.5px;top:254.5px">默认值</div>
<div class="in" style="left:66px;top:295px;width:1112px;height:140px"></div>
<div class="lb" style="left:64.5px;top:466.5px">控件宽度</div>
<div class="in" style="left:66px;top:507px;width:200px;height:60px"></div>
<div class="lb" style="left:273.5px;top:514px;font-size:33.5px;font-family:'Liberation Serif',serif">px</div>
<div class="lb" style="left:674.5px;top:466.5px">控件高度</div>
<div class="in" style="left:676px;top:507px;width:200px;height:60px"></div>
<div class="lb" style="left:883.5px;top:514px;font-size:33.5px;font-family:'Liberation Serif',serif">px</div>
<div class="ft"></div>
<div class="bt" style="left:980px;background:#278644;color:#fff">确定</div>
<div class="bt" style="left:1095px;background:#f8f8f8;color:#484848;border:2px solid #bcbcbc;line-height:56px">取消</div>
<svg style="left:1210px;top:759px" width="20" height="20" viewBox="0 0 20 20"><path d="M20 0 V20 H0 Z" fill="#bcbcbc"/></svg>
</div>

</div></div>
<svg style="left:4px;top:117px" width="5" height="10" viewBox="0 0 5 10"><path d="M0.5 0 L3.8 9.5" stroke="#14245a" stroke-width="1.6" fill="none"/></svg>
<svg style="left:4px;top:315px" width="5" height="10" viewBox="0 0 5 10"><path d="M0.5 0 L3.8 9.5" stroke="#14245a" stroke-width="1.6" fill="none"/></svg>
</body>
</html>
